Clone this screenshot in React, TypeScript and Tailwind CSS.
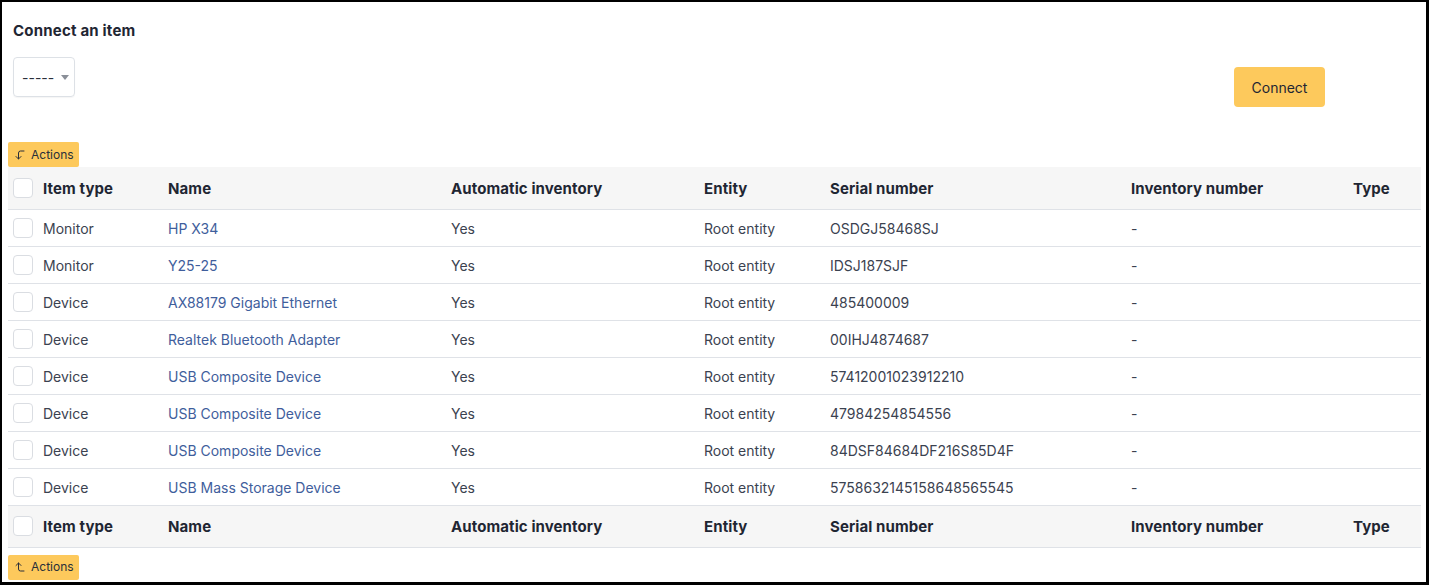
import { CornerLeftDown, CornerLeftUp } from "lucide-react";

const rows = [
  { type: "Monitor", name: "HP X34", serial: "OSDGJ58468SJ" },
  { type: "Monitor", name: "Y25-25", serial: "IDSJ187SJF" },
  { type: "Device", name: "AX88179 Gigabit Ethernet", serial: "485400009" },
  { type: "Device", name: "Realtek Bluetooth Adapter", serial: "00IHJ4874687" },
  { type: "Device", name: "USB Composite Device", serial: "57412001023912210" },
  { type: "Device", name: "USB Composite Device", serial: "47984254854556" },
  { type: "Device", name: "USB Composite Device", serial: "84DSF84684DF216S85D4F" },
  { type: "Device", name: "USB Mass Storage Device", serial: "5758632145158648565545" },
];

const headers = ["Item type", "Name", "Automatic inventory", "Entity", "Serial number", "Inventory number", "Type"];

function Checkbox() {
  return <div className="w-5 h-5 rounded-[4px] border border-[#dadde2] bg-white" />;
}

function HeaderRow() {
  return (
    <tr className="h-[42px] bg-[#f6f6f6] border-b border-[#dfe2e7]">
      <th className="pl-[5px] text-left font-normal">
        <Checkbox />
      </th>
      {headers.map((h) => (
        <th key={h} className="pl-[5px] pt-[2px] text-left font-bold text-[#1f2633] text-[15px] tracking-[0.1px]">
          {h}
        </th>
      ))}
    </tr>
  );
}

function ActionsButton({ up }: { up?: boolean }) {
  return (
    <button className="flex items-center gap-[5px] h-[25px] pl-[6px] pr-[5px] rounded-[2px] bg-[#fdc95c] text-[12px] text-[#2a2f3a]">
      {up ? <CornerLeftUp size={12} strokeWidth={2} /> : <CornerLeftDown size={12} strokeWidth={2} />}
      Actions
    </button>
  );
}

export default function App() {
  return (
    <div
      className="h-[585px] w-full border-t-2 border-l-2 border-r-[3px] border-b-[3px] border-black bg-white text-[#3b4250] text-[14px]"
      style={{ fontFamily: "Inter, 'Noto Sans', sans-serif" }}
    >
      <div className="px-[6px] pt-[19px]">
        <div className="pl-[5px]">
          <h2 className="text-[15px] leading-5 font-bold text-[#1f2633] tracking-[0.2px]">Connect an item</h2>
          <div className="flex items-start justify-between pr-[95px] mt-[16px]">
            <div className="flex items-center gap-[7px] h-10 w-[62px] pl-[8px] rounded-[4px] border border-[#dde1e6] shadow-[0_1px_1px_rgba(0,0,0,0.04)] text-[#2a2f3a]">
              <span>-----</span>
              <svg width="8" height="5" viewBox="0 0 8 5">
                <path d="M0 0h8L4 5z" fill="#8a8f98" />
              </svg>
            </div>
            <button className="mt-[10px] h-10 w-[91px] rounded-[4px] bg-[#fdc95c] text-[14px] text-[#1f2633]">
              Connect
            </button>
          </div>
        </div>
        <div className="mt-[35px]">
          <ActionsButton />
        </div>
        <table className="w-[1413px] table-fixed border-collapse">
          <colgroup>
            <col className="w-[30px]" />
            <col className="w-[125px]" />
            <col className="w-[283px]" />
            <col className="w-[253px]" />
            <col className="w-[126px]" />
            <col className="w-[301px]" />
            <col className="w-[222px]" />
            <col className="w-[73px]" />
          </colgroup>
          <thead>
            <HeaderRow />
          </thead>
          <tbody>
            {rows.map((r, i) => (
              <tr key={i} className="h-[37px] border-b border-[#dfe2e7]">
                <td className="pl-[5px]">
                  <Checkbox />
                </td>
                <td className="pl-[5px] pt-[2px]">{r.type}</td>
                <td className="pl-[5px] pt-[2px] text-[#3f5e9c]">{r.name}</td>
                <td className="pl-[5px] pt-[2px]">Yes</td>
                <td className="pl-[5px] pt-[2px]">Root entity</td>
                <td className="pl-[5px] pt-[2px]">{r.serial}</td>
                <td className="pl-[5px] pt-[2px]">-</td>
                <td className="pl-[5px]"></td>
              </tr>
            ))}
          </tbody>
          <tfoot>
            <HeaderRow />
          </tfoot>
        </table>
        <div className="mt-[7px]">
          <ActionsButton up />
        </div>
      </div>
    </div>
  );
}
